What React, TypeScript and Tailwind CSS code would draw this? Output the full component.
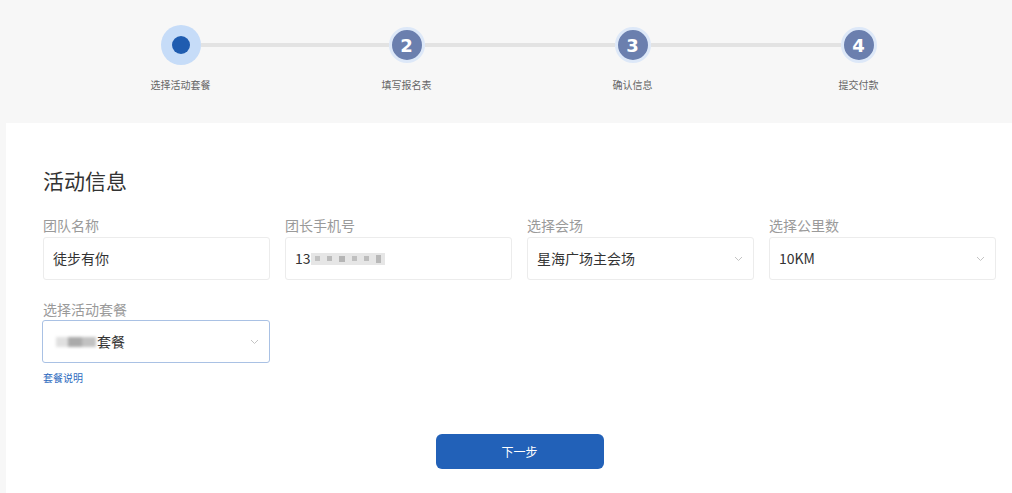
import React from "react";

const font = { fontFamily: '"Noto Sans CJK SC", "Noto Sans", sans-serif' };

function Chevron() {
  return (
    <svg width="9" height="6" viewBox="0 0 9 6" className="shrink-0">
      <polyline points="1,1 4.5,4.5 8,1" fill="none" stroke="#c4c4c4" strokeWidth="1" />
    </svg>
  );
}

function Steps() {
  const steps = ["选择活动套餐", "填写报名表", "确认信息", "提交付款"];
  return (
    <div className="grid grid-cols-4 w-[904px] mx-auto pt-[25px]">
      {steps.map((s, i) => (
        <div key={s} className="flex flex-col items-center">
          <div className="flex items-center w-full h-[40px]">
            <div className={`flex-1 h-[4px] ${i === 0 ? "bg-transparent" : "bg-[#e3e3e3]"}`} />
            {i === 0 ? (
              <div className="w-[40px] h-[40px] rounded-full bg-[#c6dcf8] flex items-center justify-center">
                <div className="w-[18px] h-[18px] rounded-full bg-[#1f5cb0]" />
              </div>
            ) : (
              <div className="w-[36px] h-[36px] rounded-full bg-[#6b7fae] border-[3px] border-[#dde8f8] flex items-center justify-center text-white text-[18px] font-bold" style={{ fontFamily: '"DejaVu Sans", sans-serif' }}>
                {i + 1}
              </div>
            )}
            <div className={`flex-1 h-[4px] ${i === 3 ? "bg-transparent" : "bg-[#e3e3e3]"}`} />
          </div>
          <div className="mt-[13px] text-[10px] leading-[14px] text-[#666]">{s}</div>
        </div>
      ))}
    </div>
  );
}

function Field({ label, children, select, focused }: { label: string; children: React.ReactNode; select?: boolean; focused?: boolean }) {
  return (
    <div className="flex flex-col w-[227px]">
      <div className="text-[14px] leading-[20px] text-[#9a9a9a]">{label}</div>
      <div
        className={`mt-[2px] h-[43px] rounded-[3px] border flex items-center justify-between pl-[9px] pr-[10px] text-[14px] text-[#333] ${
          focused ? "border-[#a9c1e4]" : "border-[#ececec]"
        }`}
      >
        <div className="flex items-center">{children}</div>
        {select && <Chevron />}
      </div>
    </div>
  );
}

export default function App() {
  return (
    <div className="w-[1012px] h-[493px] bg-[#f7f7f7] overflow-hidden" style={font}>
      <div className="h-[123px] pl-[43px] pr-[16px]">
        <Steps />
      </div>
      <div className="ml-[6px] h-[370px] bg-white pl-[37px] pr-[16px] pt-[43px]">
        <div className="text-[21px] leading-[28px] text-[#333]">活动信息</div>
        <div className="mt-[21px] flex gap-[15px]">
          <Field label="团队名称">徒步有你</Field>
          <Field label="团长手机号">
            <span>13</span>
            <div className="flex items-center justify-between w-[74px] h-[12px] px-[4px] bg-[#e6e6e6] blur-[0.6px]">
              <div className="w-[5px] h-[5px] bg-[#c2c2c2]" />
              <div className="w-[5px] h-[5px] bg-[#bbbbbb]" />
              <div className="w-[6px] h-[6px] bg-[#b5b5b5]" />
              <div className="w-[5px] h-[5px] bg-[#c0c0c0]" />
              <div className="w-[5px] h-[5px] bg-[#bdbdbd]" />
              <div className="w-[5px] h-[8px] bg-[#b8b8b8]" />
            </div>
          </Field>
          <Field label="选择会场" select>星海广场主会场</Field>
          <Field label="选择公里数" select>10KM</Field>
        </div>
        <div className="mt-[19px] flex">
          <div className="flex flex-col w-[228px] -ml-[1px]">
            <div className="text-[14px] leading-[20px] text-[#9a9a9a] ml-[1px]">选择活动套餐</div>
            <div className="mt-[1px] h-[43px] rounded-[3px] border border-[#a9c1e4] flex items-center justify-between pl-[13px] pr-[10px] text-[14px] text-[#333]">
              <div className="flex items-center">
                <div className="flex items-center blur-[1.5px]">
                  <div className="w-[12px] h-[10px] bg-[#e0e0e0]" />
                  <div className="w-[14px] h-[10px] bg-[#aaaaaa]" />
                  <div className="w-[14px] h-[10px] bg-[#c2c2c2]" />
                </div>
                <span className="ml-[1px]">套餐</span>
              </div>
              <Chevron />
            </div>
            <div className="mt-[8px] text-[10px] leading-[14px] text-[#2e6bc0] ml-[1px]">套餐说明</div>
          </div>
        </div>
        <div className="mt-[49px] flex justify-center">
          <button className="w-[168px] h-[35px] rounded-[6px] bg-[#2261b8] text-white text-[12px]">下一步</button>
        </div>
      </div>
    </div>
  );
}
